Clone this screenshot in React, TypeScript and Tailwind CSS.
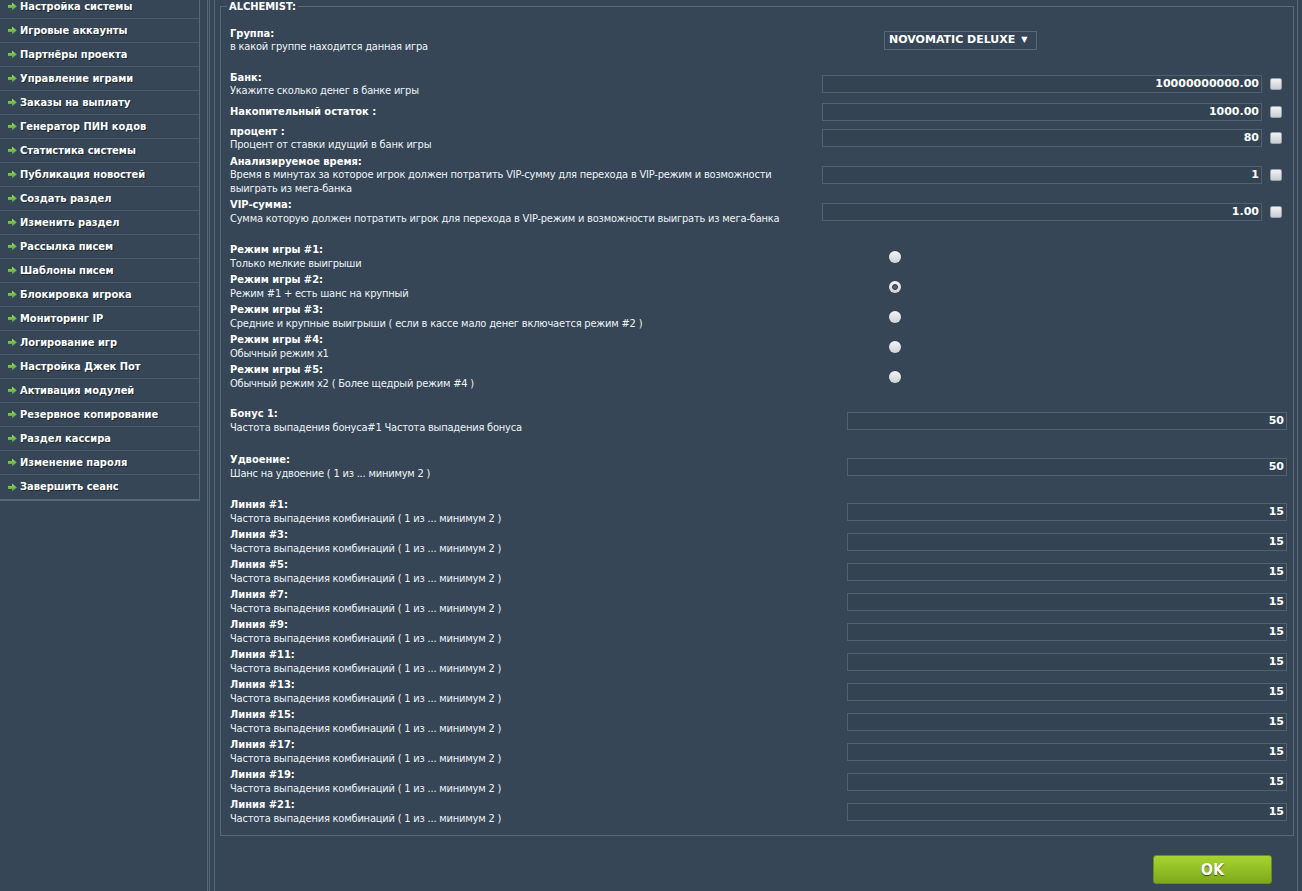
import React from 'react'

const menu = [
  'Настройка системы',
  'Игровые аккаунты',
  'Партнёры проекта',
  'Управление играми',
  'Заказы на выплату',
  'Генератор ПИН кодов',
  'Статистика системы',
  'Публикация новостей',
  'Создать раздел',
  'Изменить раздел',
  'Рассылка писем',
  'Шаблоны писем',
  'Блокировка игрока',
  'Мониторинг IP',
  'Логирование игр',
  'Настройка Джек Пот',
  'Активация модулей',
  'Резервное копирование',
  'Раздел кассира',
  'Изменение пароля',
  'Завершить сеанс',
]

const modes = [
  ['Режим игры #1:', 'Только мелкие выигрыши'],
  ['Режим игры #2:', 'Режим #1 + есть шанс на крупный'],
  ['Режим игры #3:', 'Средние и крупные выигрыши ( если в кассе мало денег включается режим #2 )'],
  ['Режим игры #4:', 'Обычный режим x1'],
  ['Режим игры #5:', 'Обычный режим x2 ( Более щедрый режим #4 )'],
]

const lines = [1, 3, 5, 7, 9, 11, 13, 15, 17, 19, 21]

const wide = { fontFamily: '"DejaVu Sans", sans-serif' }

function Arrow() {
  return (
    <svg width="9" height="9" viewBox="0 0 9 9" className="shrink-0">
      <defs>
        <linearGradient id="ag" x1="0" y1="0" x2="0" y2="1">
          <stop offset="0" stopColor="#a6e26a" />
          <stop offset="1" stopColor="#3f9a2a" />
        </linearGradient>
      </defs>
      <path d="M0 3h4V0.5L8.8 4.5 4 8.5V6H0z" fill="url(#ag)" />
    </svg>
  )
}

function Text({ label, desc }: { label: string; desc?: React.ReactNode }) {
  return (
    <div className="flex-1">
      <div className="font-bold text-white">{label}</div>
      {desc && <div className="tracking-[-0.2px] text-[#eef2f6]">{desc}</div>}
    </div>
  )
}

function Field({ value, check }: { value: string; check?: boolean }) {
  return (
    <div className="flex w-[465px] items-center">
      <div
        style={wide}
        className={`flex h-[18px] w-[440px] items-center justify-end border border-[#4f6174] bg-[#334352] pr-[2px] font-bold text-white ${
          check ? '' : 'ml-auto'
        }`}
      >
        {value}
      </div>
      {check && (
        <div className="ml-[8px] h-[12px] w-[12px] rounded-[2px] border border-[#9aa3ab] bg-gradient-to-b from-[#f2f2f2] to-[#c9cdd1]" />
      )}
    </div>
  )
}

function Radio({ on }: { on?: boolean }) {
  return (
    <div className="w-[465px]">
      <div className="ml-[67px] flex h-[12px] w-[12px] items-center justify-center rounded-full bg-gradient-to-b from-[#f4f4f4] to-[#cfd3d6]">
        {on && <div className="h-[6px] w-[6px] rounded-full border border-[#2c3a47] bg-[#55606a]" />}
      </div>
    </div>
  )
}

export default function App() {
  return (
    <div
      className="flex h-[891px] overflow-hidden bg-[#364657] text-[11px] leading-[13.5px]"
      style={{ fontFamily: '"DejaVu Sans Condensed", "DejaVu Sans", sans-serif' }}
    >
      {/* Sidebar */}
      <div className="w-[200px] shrink-0 self-start">
        <div className="-mt-[5px] border-r border-b-2 border-[#56687b]">
          {menu.map((m) => (
            <div
              key={m}
              className="flex h-[24px] items-center gap-[3px] border-b border-[#4b5c6e] pl-[8px] font-bold text-white [text-shadow:1px_1px_0_#1f2a35] last:border-b-0"
            >
              <Arrow />
              <span>{m}</span>
            </div>
          ))}
        </div>
      </div>

      {/* Main */}
      <div className="ml-[7px] flex flex-1 border-l border-[#56687b]">
        <div className="ml-[1px] flex flex-1 border-l border-[#56687b] pl-[4px]">
          <div className="mr-[4px] flex-1 border-x border-[#56687b] pl-[5px] pr-[3px]">
            <fieldset className="border border-[#56687b] px-[6px] pb-[10px]">
              <legend className="px-[2px] font-bold text-white">ALCHEMIST:</legend>
              <div className="pl-[3px] pt-[13px]">
                {/* Группа */}
                <div className="flex items-center">
                  <Text label="Группа:" desc="в какой группе находится данная игра" />
                  <div className="w-[465px]">
                    <div
                      style={wide}
                      className="ml-[62px] flex h-[19px] w-[153px] items-center border border-[#56687b] pl-[4px] font-bold text-white"
                    >
                      NOVOMATIC DELUXE
                      <span className="ml-[6px] text-[8px]">▼</span>
                    </div>
                  </div>
                </div>

                {/* Bank settings */}
                <div className="mt-[17px] flex flex-col">
                  <div className="flex items-center">
                    <Text label="Банк:" desc="Укажите сколько денег в банке игры" />
                    <Field value="10000000000.00" check />
                  </div>
                  <div className="mt-[5px] flex items-center">
                    <Text label="Накопительный остаток :" />
                    <Field value="1000.00" check />
                  </div>
                  <div className="mt-[4px] flex items-center">
                    <Text label="процент :" desc="Процент от ставки идущий в банк игры" />
                    <Field value="80" check />
                  </div>
                  <div className="mt-[3px] flex items-center">
                    <Text
                      label="Анализируемое время:"
                      desc={
                        <>
                          Время в минутах за которое игрок должен потратить VIP-сумму для перехода в VIP-режим и возможности
                          <br />
                          выиграть из мега-банка
                        </>
                      }
                    />
                    <Field value="1" check />
                  </div>
                  <div className="mt-[3px] flex items-center">
                    <Text
                      label="VIP-сумма:"
                      desc="Сумма которую должен потратить игрок для перехода в VIP-режим и возможности выиграть из мега-банка"
                    />
                    <Field value="1.00" check />
                  </div>
                </div>

                {/* Modes */}
                <div className="mt-[18px] flex flex-col gap-[3px]">
                  {modes.map(([l, d], i) => (
                    <div key={l} className="flex items-center">
                      <Text label={l} desc={d} />
                      <Radio on={i === 1} />
                    </div>
                  ))}
                </div>

                <div className="mt-[17px] flex items-center">
                  <Text label="Бонус 1:" desc="Частота выпадения бонуса#1 Частота выпадения бонуса" />
                  <Field value="50" />
                </div>

                <div className="mt-[19px] flex items-center">
                  <Text label="Удвоение:" desc="Шанс на удвоение ( 1 из ... минимум 2 )" />
                  <Field value="50" />
                </div>

                <div className="mt-[18px] flex flex-col gap-[3px]">
                  {lines.map((n) => (
                    <div key={n} className="flex items-center">
                      <Text label={`Линия #${n}:`} desc="Частота выпадения комбинаций ( 1 из ... минимум 2 )" />
                      <Field value="15" />
                    </div>
                  ))}
                </div>
              </div>
            </fieldset>

            <div className="mt-[19px] flex justify-end pr-[22px]">
              <button className="h-[29px] w-[119px] rounded-[3px] border border-[#6d8f14] bg-gradient-to-b from-[#a8d431] to-[#7da91a] text-[16px] font-bold text-white [text-shadow:0_1px_1px_#3d5508]">
                OK
              </button>
            </div>
          </div>
        </div>
      </div>
    </div>
  )
}
